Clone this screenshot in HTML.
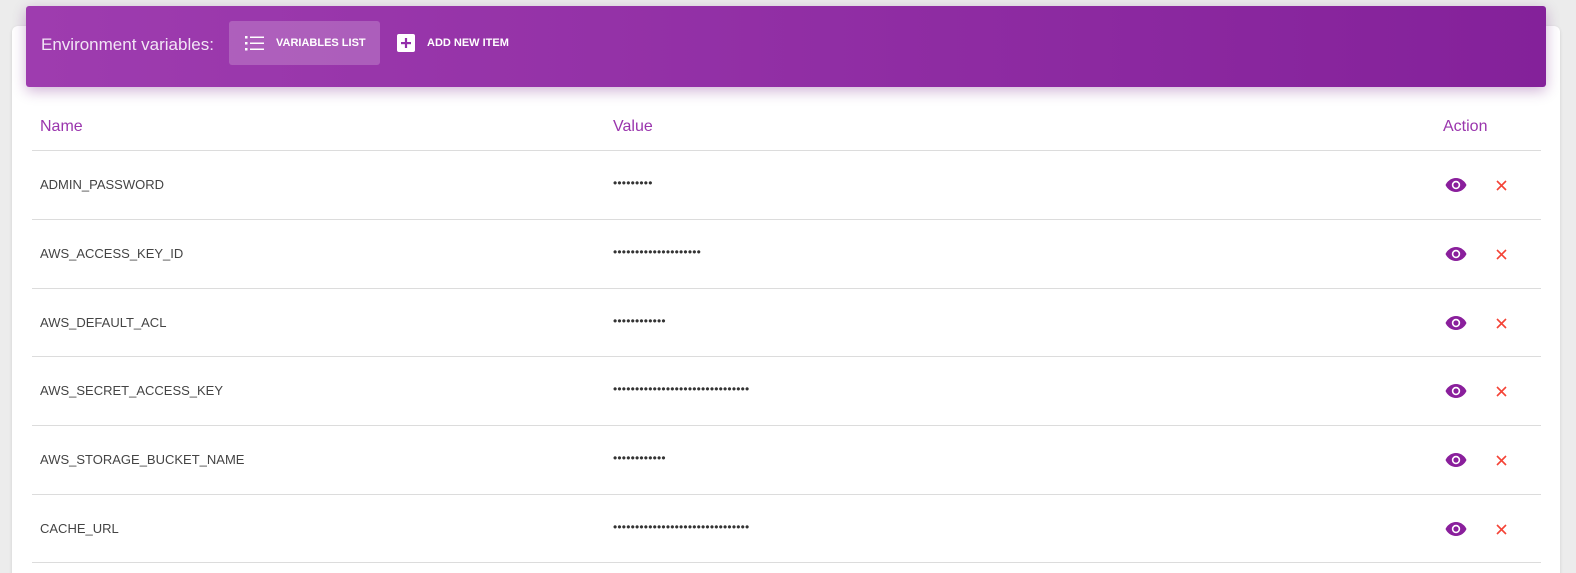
<!DOCTYPE html>
<html><head><style>
html,body{margin:0;width:1576px;height:573px;overflow:hidden}
body{background:#ececec;font-family:"Liberation Sans",sans-serif;position:relative}
.card{position:absolute;left:12px;top:26px;width:1548px;height:560px;background:#fff;border-radius:6px;box-shadow:0 1px 3px rgba(0,0,0,.12)}
.bar{position:absolute;left:26px;top:6px;width:1520px;height:81px;border-radius:3px;background:linear-gradient(90deg,#9e3caf,#84219a);box-shadow:0 4px 14px rgba(100,0,120,.3)}
.title{position:absolute;left:15px;top:29px;color:#f2e6f5;font-size:17px}
.btn1{position:absolute;left:203px;top:15px;width:151px;height:44px;background:rgba(255,255,255,.2);border-radius:3px}
.btxt{position:absolute;color:#fff;font-size:11px;font-weight:bold;top:31px}
.head{position:absolute;top:118px;color:#9a35ad;font-size:16px}
.line{position:absolute;left:32px;width:1509px;height:1px;background:#dcdcdc}
.cell{position:absolute;font-size:13px;color:#444}
.dots{position:absolute;font-size:12px;color:#333;letter-spacing:0.2px}
</style></head><body>
<div class="card"></div>
<div class="bar">
<div class="title">Environment variables:</div>
<div class="btn1"></div>
<svg style="position:absolute;left:219px;top:29px" width="20" height="16" viewBox="0 0 20 16"><g fill="#fff"><rect x="0" y="1" width="2.5" height="2.5"/><rect x="0" y="7" width="2.5" height="2.5"/><rect x="0" y="13" width="2.5" height="2.5"/><rect x="5" y="1.5" width="14" height="1.5"/><rect x="5" y="7.5" width="14" height="1.5"/><rect x="5" y="13.5" width="14" height="1.5"/></g></svg>
<div class="btxt" style="left:250px">VARIABLES LIST</div>
<svg style="position:absolute;left:371px;top:28px" width="18" height="18" viewBox="0 0 18 18"><rect width="18" height="18" rx="2" fill="#fff"/><rect x="4" y="8" width="10" height="2.2" fill="#932eaa"/><rect x="7.9" y="4" width="2.2" height="10" fill="#932eaa"/></svg>
<div class="btxt" style="left:401px">ADD NEW ITEM</div>
</div>
<div class="head" style="left:40px">Name</div>
<div class="head" style="left:613px">Value</div>
<div class="head" style="left:1443px">Action</div>
<div class="line" style="top:150px"></div>
<div id="rows"></div>
<script>
var d=[["ADMIN_PASSWORD",9],["AWS_ACCESS_KEY_ID",20],["AWS_DEFAULT_ACL",12],["AWS_SECRET_ACCESS_KEY",31],["AWS_STORAGE_BUCKET_NAME",12],["CACHE_URL",31]];
var tops=[150,219,288,356,425,494],h="";
d.forEach(function(r,i){var t=tops[i];var c=t+35;
h+='<div class="cell" style="left:40px;top:'+(c-8)+'px">'+r[0]+'</div>';
h+='<div class="dots" style="left:613px;top:'+(c-9)+'px">'+"•".repeat(r[1])+'</div>';
h+='<svg style="position:absolute;left:1445px;top:'+(c-8)+'px" width="22" height="16" viewBox="0 0 22 16"><path d="M11 1C6 1 2 4.5 0.5 8 2 11.5 6 15 11 15s9-3.5 10.5-7C20 4.5 16 1 11 1z" fill="#8a1f9c"/><circle cx="11" cy="8" r="4.2" fill="#fff"/><circle cx="11" cy="8" r="2.6" fill="#8a1f9c"/></svg>';
h+='<svg style="position:absolute;left:1496px;top:'+(c-5)+'px" width="11" height="11" viewBox="0 0 11 11"><path d="M1 1L10 10M10 1L1 10" stroke="#f44336" stroke-width="1.6"/></svg>';
h+='<div class="line" style="top:'+(tops[i+1]||562)+'px"></div>';});
document.getElementById("rows").innerHTML=h;
</script>
</body></html>
